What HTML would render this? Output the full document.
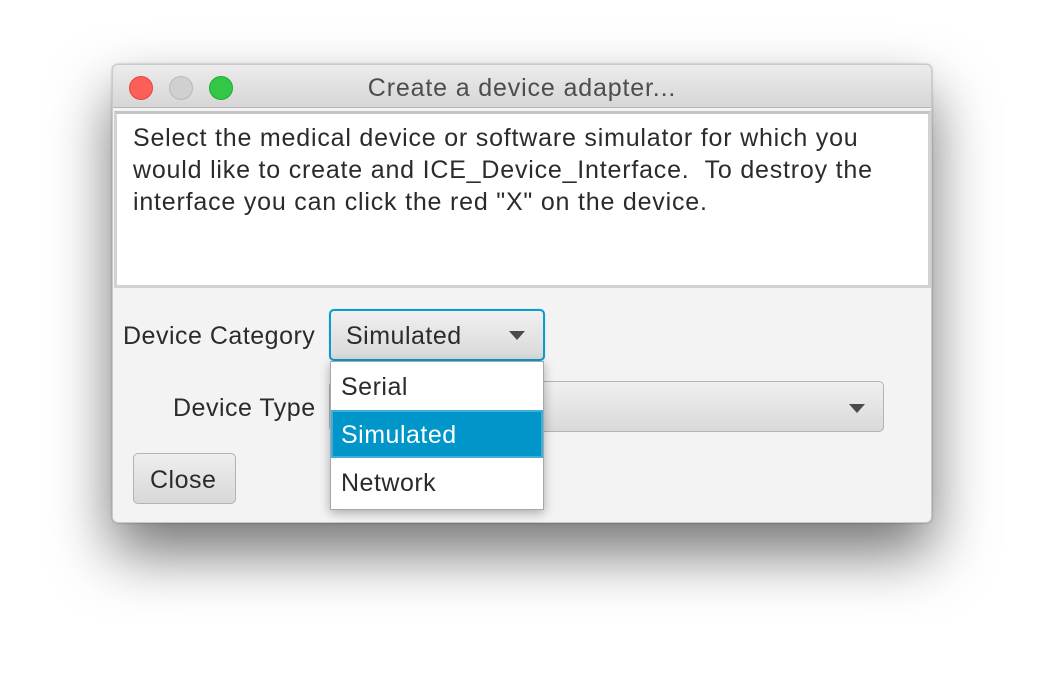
<!DOCTYPE html>
<html><head><meta charset="utf-8"><style>
*{box-sizing:border-box;margin:0;padding:0}
body{width:1044px;height:684px;background:#fff;position:relative;overflow:hidden;font-family:"Liberation Sans",Arial,sans-serif;color:#2b2b2b}
.win{position:absolute;left:112px;top:64px;width:820px;height:459px;background:#f3f3f3;border-radius:6px;border:1px solid #c9c9c9;box-shadow:0 30px 60px rgba(0,0,0,0.55),0 0 2px rgba(0,0,0,0.3);overflow:visible}
.title{position:absolute;left:0;top:0;width:100%;height:43px;background:linear-gradient(#ececec,#d6d6d6);border-bottom:1px solid #b5b5b5;border-radius:6px 6px 0 0;text-align:center;font-size:25px;letter-spacing:0.85px;line-height:46px;color:#4d4d4d;white-space:nowrap}
.dot{position:absolute;top:11px;width:24px;height:24px;border-radius:50%}
.ta{position:absolute;left:1px;top:46px;width:817px;height:177px;background:#fff;border:3px solid #d2d2d2;border-top-color:#c4c4c4;padding:8px 16px;font-size:25px;letter-spacing:0.8px;line-height:32px;color:#2b2b2b;white-space:nowrap}
.lbl{position:absolute;font-size:25px;letter-spacing:0.5px;color:#2b2b2b;white-space:nowrap}
.combo{position:absolute;border-radius:5px;background:linear-gradient(#f0f0f0,#d9d9d9);border:1px solid #b3b3b3}
.arrow{position:absolute;width:0;height:0;border-left:8px solid transparent;border-right:8px solid transparent;border-top:9px solid #4a4a4a}
.pop{position:absolute;left:217px;top:296px;width:214px;height:149px;background:#fff;border:1px solid #a8a8a8;box-shadow:0 3px 10px rgba(0,0,0,0.3)}
.item{height:48px;font-size:25px;letter-spacing:0.5px;line-height:50px;padding-left:10px;color:#2b2b2b}
</style></head><body>
<div class="win">
 <div class="title">Create a device adapter...
  <div class="dot" style="left:16px;background:#fc5f57;border:1px solid #df4744"></div>
  <div class="dot" style="left:56px;background:#d0d0d0;border:1px solid #b8b8b8"></div>
  <div class="dot" style="left:96px;background:#33c748;border:1px solid #22a836"></div>
 </div>
 <div class="ta">Select the medical device or software simulator for which you<br>would like to create and ICE_Device_Interface.&nbsp; To destroy the<br>interface you can click the red "X" on the device.</div>
 <div class="lbl" style="left:10px;top:257px">Device Category</div>
 <div class="combo" style="left:216px;top:244px;width:216px;height:52px;border:2px solid #0a9bd0;box-shadow:0 0 1px #6cc"></div>
 <div class="lbl" style="left:233px;top:257px">Simulated</div>
 <div class="arrow" style="left:396px;top:266px"></div>
 <div class="lbl" style="left:60px;top:329px">Device Type</div>
 <div class="combo" style="left:216px;top:316px;width:555px;height:51px"></div>
 <div class="arrow" style="left:736px;top:339px"></div>
 <div class="combo" style="left:20px;top:388px;width:103px;height:51px;background:linear-gradient(#eeeeee,#d8d8d8)"></div>
 <div class="lbl" style="left:37px;top:401px">Close</div>
 <div class="pop">
  <div class="item">Serial</div>
  <div class="item" style="background:#0096c9;color:#fff;border:2px solid #3ab0db;padding-left:8px;line-height:46px">Simulated</div>
  <div class="item">Network</div>
 </div>
</div>
</body></html>
